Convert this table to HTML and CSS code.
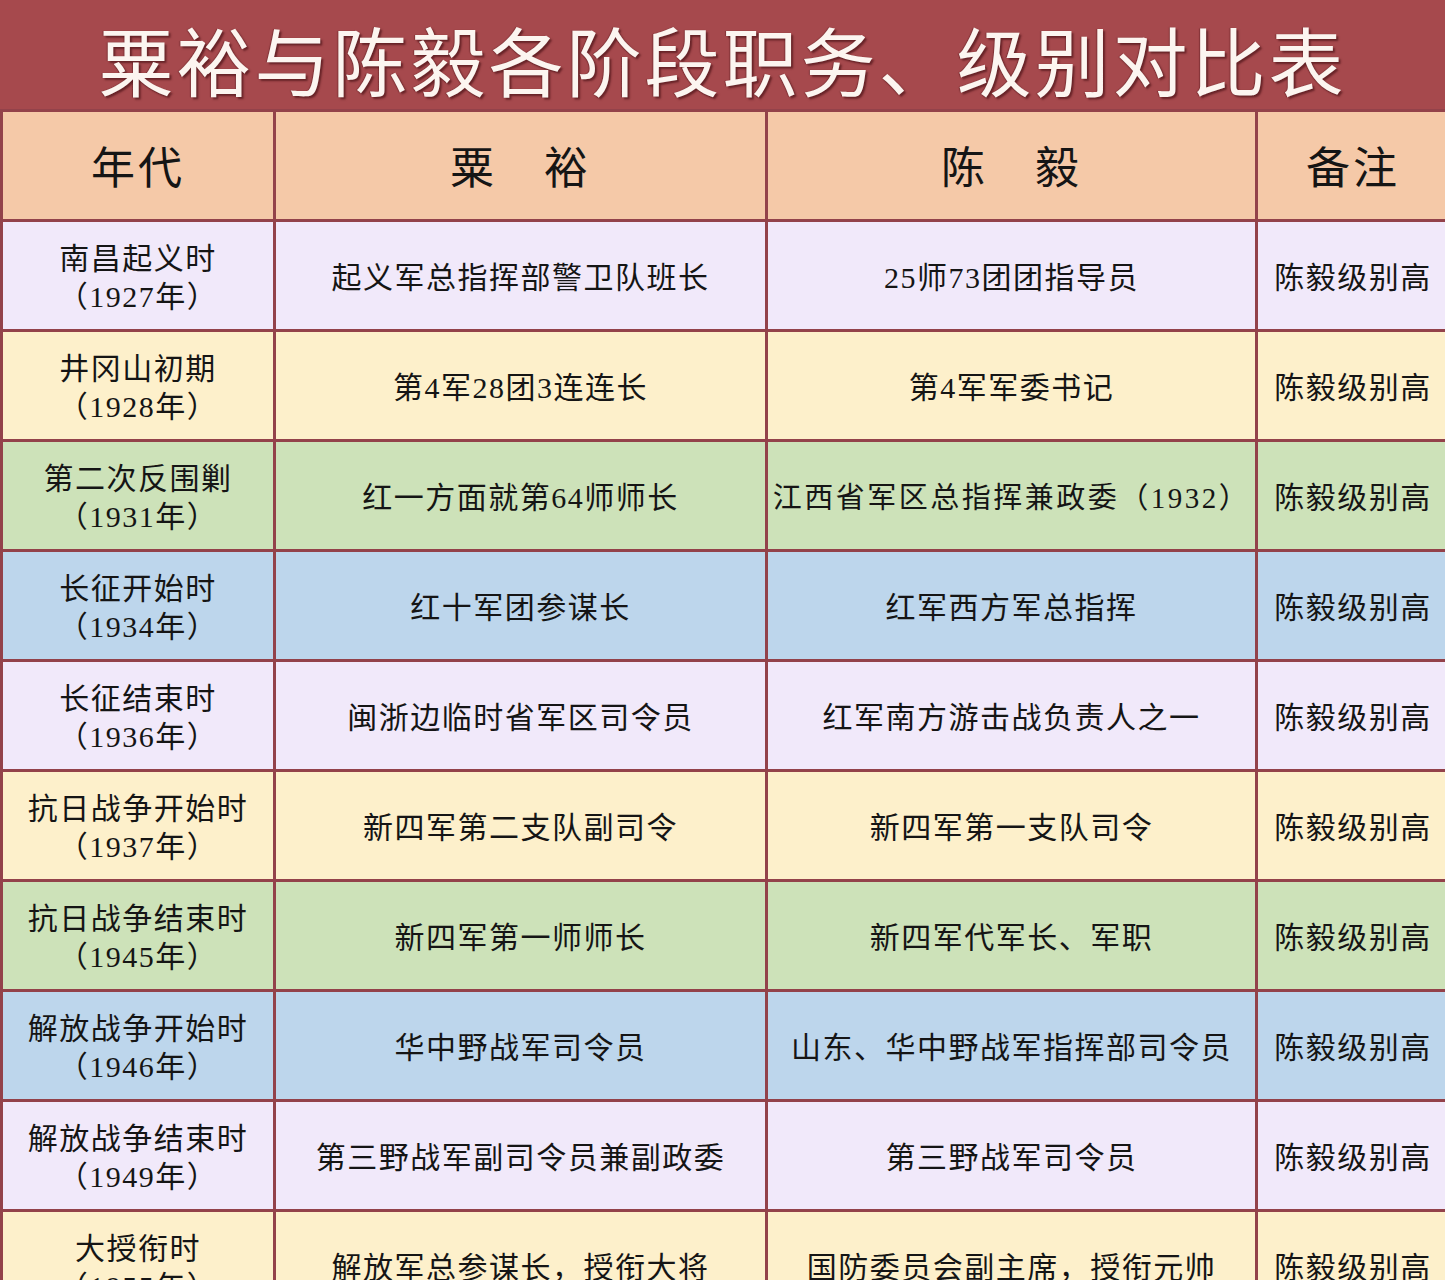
FILE: index.html
```html
<!DOCTYPE html>
<html lang="zh-CN">
<head>
<meta charset="utf-8">
<title>粟裕与陈毅各阶段职务、级别对比表</title>
<link rel="stylesheet" href="styles.css">
</head>
<body>
<header class="banner">
  <h1 class="title">粟裕与陈毅各阶段职务、级别对比表</h1>
</header>
<div class="table">
  <div class="cell head">年代</div>
  <div class="cell head">粟　裕</div>
  <div class="cell head">陈　毅</div>
  <div class="cell head">备注</div>

  <div class="cell lav">南昌起义时<br>（1927年）</div>
  <div class="cell lav">起义军总指挥部警卫队班长</div>
  <div class="cell lav">25师73团团指导员</div>
  <div class="cell lav">陈毅级别高</div>

  <div class="cell cream">井冈山初期<br>（1928年）</div>
  <div class="cell cream">第4军28团3连连长</div>
  <div class="cell cream">第4军军委书记</div>
  <div class="cell cream">陈毅级别高</div>

  <div class="cell green">第二次反围剿<br>（1931年）</div>
  <div class="cell green">红一方面就第64师师长</div>
  <div class="cell green tight">江西省军区总指挥兼政委（1932）</div>
  <div class="cell green">陈毅级别高</div>

  <div class="cell blue">长征开始时<br>（1934年）</div>
  <div class="cell blue">红十军团参谋长</div>
  <div class="cell blue">红军西方军总指挥</div>
  <div class="cell blue">陈毅级别高</div>

  <div class="cell lav">长征结束时<br>（1936年）</div>
  <div class="cell lav">闽浙边临时省军区司令员</div>
  <div class="cell lav">红军南方游击战负责人之一</div>
  <div class="cell lav">陈毅级别高</div>

  <div class="cell cream">抗日战争开始时<br>（1937年）</div>
  <div class="cell cream">新四军第二支队副司令</div>
  <div class="cell cream">新四军第一支队司令</div>
  <div class="cell cream">陈毅级别高</div>

  <div class="cell green">抗日战争结束时<br>（1945年）</div>
  <div class="cell green">新四军第一师师长</div>
  <div class="cell green">新四军代军长、军职</div>
  <div class="cell green">陈毅级别高</div>

  <div class="cell blue">解放战争开始时<br>（1946年）</div>
  <div class="cell blue">华中野战军司令员</div>
  <div class="cell blue">山东、华中野战军指挥部司令员</div>
  <div class="cell blue">陈毅级别高</div>

  <div class="cell lav">解放战争结束时<br>（1949年）</div>
  <div class="cell lav">第三野战军副司令员兼副政委</div>
  <div class="cell lav">第三野战军司令员</div>
  <div class="cell lav">陈毅级别高</div>

  <div class="cell cream">大授衔时<br>（1955年）</div>
  <div class="cell cream">解放军总参谋长，授衔大将</div>
  <div class="cell cream">国防委员会副主席，授衔元帅</div>
  <div class="cell cream">陈毅级别高</div>
</div>
</body>
</html>
```

FILE: styles.css
```css
html, body {
  margin: 0;
  padding: 0;
}
body {
  width: 1445px;
  height: 1280px;
  overflow: hidden;
  background: #a5484c;
  font-family: "Liberation Serif", "Noto Sans CJK SC", serif;
  color: #151515;
}
.banner {
  height: 109px;
  background: #a6494d;
  display: flex;
  justify-content: center;
  align-items: center;
}
.title {
  margin: 8px 0 0 0;
  font-family: "Noto Sans CJK SC", sans-serif;
  font-weight: 400;
  font-size: 75px;
  line-height: 1;
  letter-spacing: 3px;
  color: #fcf5f0;
  text-shadow: 2px 2px 2px rgba(70, 15, 20, 0.65), -1px 0 1px rgba(70, 15, 20, 0.4);
}
.table {
  display: grid;
  grid-template-columns: 270px 489px 487px 190px;
  grid-auto-rows: 107px;
  gap: 3px;
  padding: 3px 0 0 3px;
  background: #93424a;
  width: 1460px;
}
.cell {
  display: flex;
  align-items: center;
  justify-content: center;
  text-align: center;
  padding-top: 4px;
  box-sizing: border-box;
  font-size: 30px;
  line-height: 38px;
  letter-spacing: 1.5px;
}
.cell.head {
  background: #f5c9a8;
  font-size: 44px;
  letter-spacing: 3px;
  padding-top: 8px;
}
.cell.lav { background: #f1e9fa; }
.cell.cream { background: #fdf0cb; }
.cell.green { background: #cde2b9; }
.cell.blue { background: #bdd6ec; }
.cell.tight {
  font-size: 29px;
  letter-spacing: 2.5px;
}
```
